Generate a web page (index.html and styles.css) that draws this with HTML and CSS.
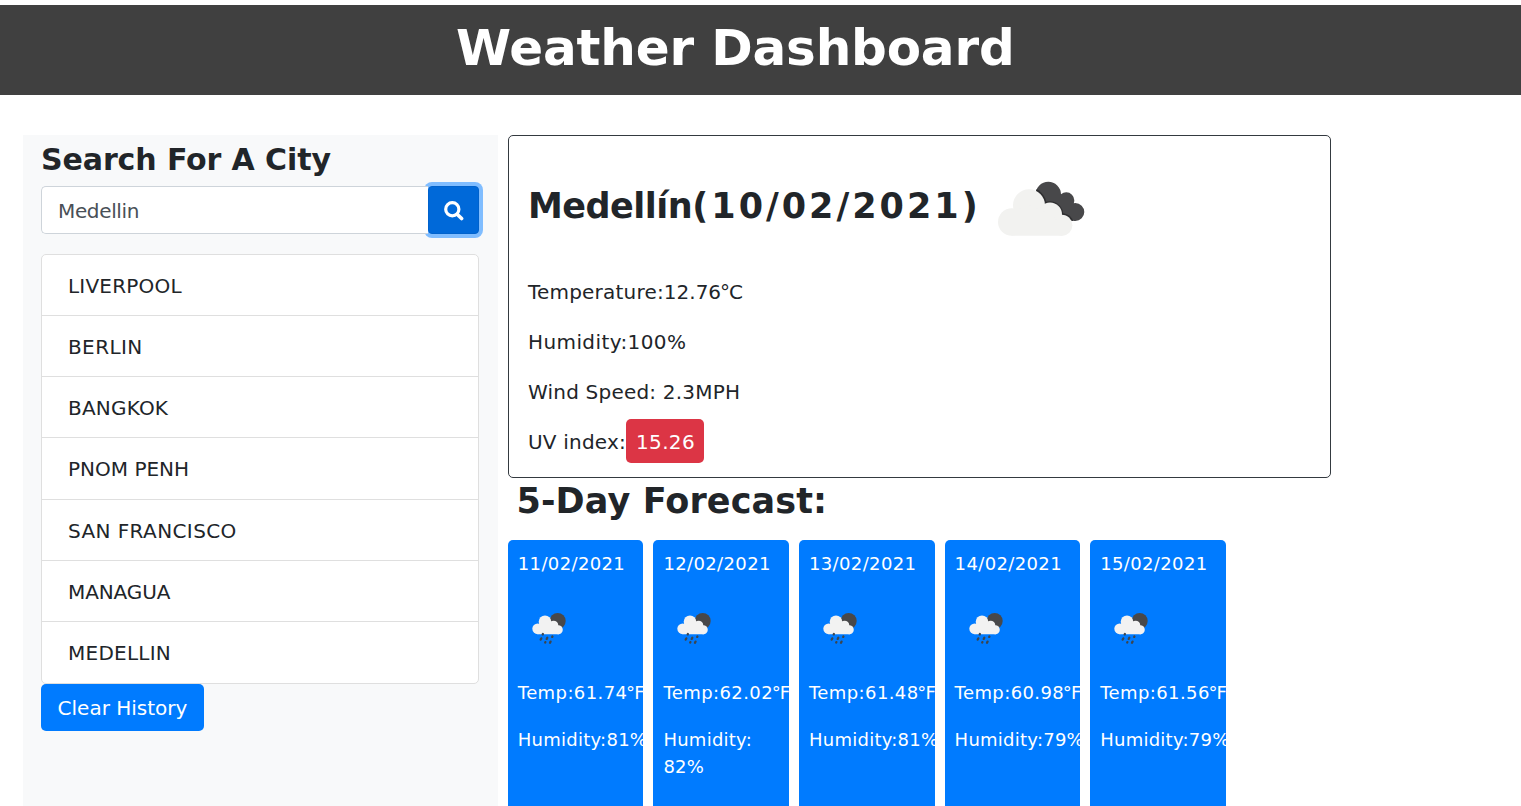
FILE: index.html
```html
<!DOCTYPE html>
<html lang="en">
<head>
<meta charset="utf-8">
<title>Weather Dashboard</title>
<link rel="stylesheet" href="styles.css">
</head>
<body>
<svg class="defs" aria-hidden="true">
  <symbol id="rain" viewBox="0 0 62 62">
    <circle cx="39.7" cy="24" r="8" fill="#48484a"/>
    <g fill="#f2f2f2">
      <circle cx="19.700" cy="31.800" r="5.400"/>
      <circle cx="27" cy="24.800" r="6.300"/>
      <circle cx="35.600" cy="28.400" r="4.700"/>
      <circle cx="40.300" cy="32.700" r="4.500"/>
      <path d="M19.700 28L27 24L36 27L41 32V37.200H19.700z"/>
    </g>
    <g stroke="#3b4650" stroke-width="2.300" stroke-linecap="round">
      <path d="M24.900 37l-.2.4M23.300 41.400l-.6 1.200M29.300 40.700l-.6 1.200M34.400 39.500l-.2.4M27.400 45.100l-.2.4M32.600 44.600l-.6 1.200"/>
    </g>
  </symbol>
</svg>
<header class="banner"><h1>Weather Dashboard</h1></header>
<div class="page">
  <aside class="sidebar">
    <h2>Search For A City</h2>
    <div class="search">
      <div class="field">Medellin</div>
      <button class="go" aria-label="Search">
        <svg width="20" height="20" viewBox="0 0 20 20"><circle cx="8.3" cy="8.3" r="6.6" fill="none" stroke="#fff" stroke-width="3.200"/><path d="M13.4 13.4l4.200 4.200" stroke="#fff" stroke-width="3.6" stroke-linecap="round"/></svg>
      </button>
    </div>
    <ul class="history">
      <li class="s1">LIVERPOOL</li>
      <li class="s4">BERLIN</li>
      <li class="s1">BANGKOK</li>
      <li>PNOM PENH</li>
      <li class="s3">SAN FRANCISCO</li>
      <li class="s0">MANAGUA</li>
      <li class="s2">MEDELLIN</li>
    </ul>
    <button class="clear">Clear History</button>
  </aside>
  <main class="main">
    <section class="today">
      <div class="place">
        <h2><span class="city">Medellín</span><span class="date">(10/02/2021)</span></h2>
        <svg class="clouds" width="90" height="60" viewBox="0 0 90 60">
          <clipPath id="back">
            <circle cx="51.300" cy="14.500" r="12.700"/>
            <circle cx="69.300" cy="20.300" r="8"/>
            <circle cx="78.300" cy="32" r="9"/>
            <path d="M51 14L69 16L80 32L76 41L50 34z"/>
          </clipPath>
          <g clip-path="url(#back)">
            <path d="M0 0H90V60H0z" fill="#48484a"/>
            <g fill="#2e2e30">
              <circle cx="32" cy="25" r="17.500"/>
              <circle cx="53" cy="34.500" r="13.200"/>
              <circle cx="65" cy="45.300" r="12"/>
            </g>
          </g>
          <g fill="#f2f2f0">
            <circle cx="14.800" cy="42" r="13.800"/>
            <circle cx="32" cy="25.200" r="16"/>
            <circle cx="53" cy="34.500" r="12"/>
            <circle cx="64.800" cy="45.300" r="10.600"/>
            <path d="M14.800 32L32 25L53 34L65 45V55.800H14.800z"/>
          </g>
        </svg>
      </div>
      <p><span class="label">Temperature:</span>12.7<span class="tight">6°</span>C</p>
      <p class="hum">Humidity:<span>100%</span></p>
      <p class="wind">Wind Speed: 2.3MPH</p>
      <p class="uv">UV index:<span class="badge">15.26</span></p>
    </section>
    <h2 class="forecast-title">5-Day Forecast:</h2>
    <section class="forecast">
      <article><p class="day">11/02/2021</p><svg><use href="#rain"/></svg><p class="temp">Temp:61.7<span class="tight">4°</span>F</p><p class="wet">Humidity:81%</p></article>
      <article><p class="day">12/02/2021</p><svg><use href="#rain"/></svg><p class="temp">Temp:62.0<span class="tight">2°</span>F</p><p class="wet">Humidity:<br>82%</p></article>
      <article><p class="day">13/02/2021</p><svg><use href="#rain"/></svg><p class="temp">Temp:61.4<span class="tight">8°</span>F</p><p class="wet">Humidity:81%</p></article>
      <article><p class="day">14/02/2021</p><svg><use href="#rain"/></svg><p class="temp">Temp:60.9<span class="tight">8°</span>F</p><p class="wet">Humidity:79%</p></article>
      <article><p class="day">15/02/2021</p><svg><use href="#rain"/></svg><p class="temp">Temp:61.5<span class="tight">6°</span>F</p><p class="wet">Humidity:79%</p></article>
    </section>
  </main>
</div>
</body>
</html>
```
FILE: styles.css
```css
* { box-sizing: border-box; margin: 0; padding: 0; }
body {
  height: 806px;
  overflow: hidden;
  padding-top: 5px;
  display: flex;
  flex-direction: column;
  background: #fff;
  color: #212529;
  font: 20px/30px Verdana, "DejaVu Sans", sans-serif;
}
.defs { position: absolute; width: 0; height: 0; }
button { font: inherit; border: 0; color: #fff; }
.banner { flex: none; height: 90px; padding: 13px 0 0 456px; background: #404040; }
.banner h1 { font-size: 50px; line-height: 60px; color: #fff; white-space: nowrap; letter-spacing: -.17px; }
.page { flex: 1; display: flex; gap: 10px; padding: 40px 0 0 23px; }
.sidebar { width: 475px; padding: 7px 19px 0 18px; background: #f8f9fa; }
.sidebar h2 { font-size: 30px; line-height: 36px; margin-bottom: 8px; letter-spacing: -.1px; }
.search { display: flex; height: 48px; margin-bottom: 20px; }
.field {
  flex: 1;
  z-index: 1;
  padding: 9px 16px;
  line-height: 30px;
  border: 1px solid #ced4da;
  border-right: 0;
  border-radius: 5px 0 0 5px;
  background: #fff;
  color: #495057;
  letter-spacing: -.35px;
}
.go {
  width: 51px;
  display: flex;
  align-items: center;
  justify-content: center;
  border: 1px solid #0062cc;
  border-radius: 4px;
  background: #0069d9;
  box-shadow: 0 0 0 4px #80bdff;
}
.go svg { margin-top: 2px; }
.history {
  height: 430px;
  list-style: none;
  border: 1px solid #dfdfdf;
  border-radius: 5px;
  background: #fff;
}
.history li { height: 59.900px; padding: 16px 26px 0; }
.history li + li { height: 61.250px; border-top: 1px solid #dfdfdf; }
.s0 { letter-spacing: -.1px; }
.s1 { letter-spacing: .2px; }
.s2 { letter-spacing: .25px; }
.s3 { letter-spacing: .4px; }
.s4 { letter-spacing: .4px; }
.clear { display: block; width: 163px; height: 47px; border-radius: 5px; background: #007bff; }
.main { width: 823px; display: flex; flex-direction: column; }
.today { flex: none; height: 343px; padding: 0 19px; border: 1px solid #343a40; border-radius: 5px; }
.place { display: flex; height: 141px; }
.place h2 { width: 469px; margin-top: 49px; font-size: 35px; line-height: 42px; white-space: nowrap; }
.city { letter-spacing: -.5px; }
.date { letter-spacing: 3px; }
.clouds { margin-top: 44px; }
.today p { margin-bottom: 20px; }
.label { letter-spacing: .2px; }
.tight { letter-spacing: -1.100px; }
.hum { letter-spacing: .4px; }
.wind { letter-spacing: .2px; }
.uv { letter-spacing: .2px; }
.badge {
  padding: 11px 9px 9px 10px;
  border-radius: 5px;
  background: #dc3545;
  color: #fff;
  letter-spacing: .37px;
}
.forecast-title { margin: 2px 0 18px 8.500px; font-size: 35px; line-height: 42px; letter-spacing: .12px; }
.forecast { flex: 1; display: flex; gap: 10px; margin-left: -.2px; }
.forecast article {
  flex: none;
  width: 135.600px;
  padding: 10px 0 0 10px;
  border-radius: 5px 5px 0 0;
  background: #007bff;
  color: #fff;
  font-size: 18px;
  line-height: 27px;
  white-space: nowrap;
}
.forecast svg { display: block; width: 62px; height: 62px; margin: 20px 0; }
.forecast .day { letter-spacing: .36px; }
.forecast .temp { margin-bottom: 20px; letter-spacing: .4px; }
.forecast .tight { letter-spacing: -.900px; }
.forecast .wet { letter-spacing: .25px; }
```
